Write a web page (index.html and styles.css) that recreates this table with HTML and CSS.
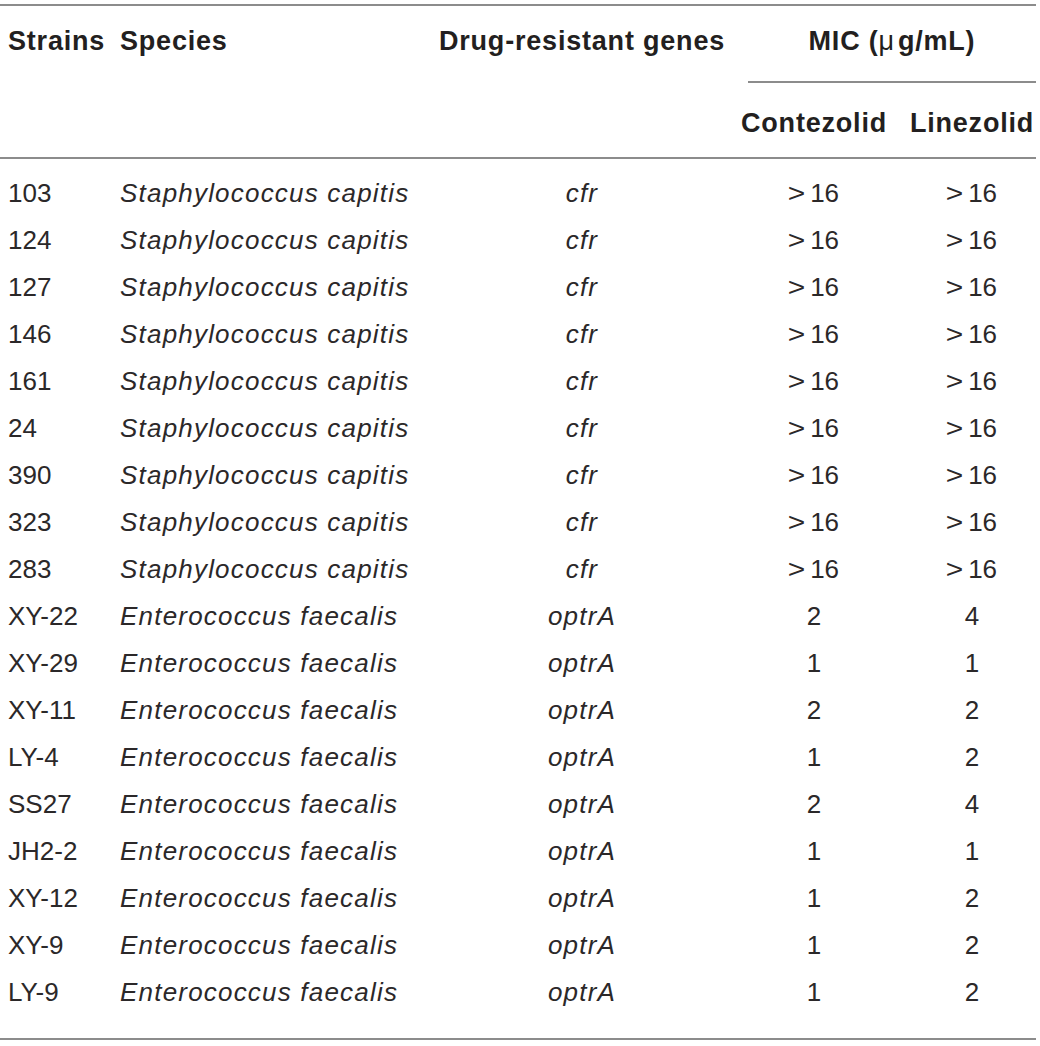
FILE: index.html
```html
<!DOCTYPE html>
<html lang="en">
  <head>
    <meta charset="UTF-8" />
    <meta name="viewport" content="width=device-width, initial-scale=1.0" />
    <title>MIC of contezolid and linezolid</title>
    <link rel="stylesheet" href="styles.css">
  </head>
  <body>
    <table class="mic-table">
      <colgroup>
        <col class="col-strain">
        <col class="col-species">
        <col class="col-gene">
        <col class="col-conte">
        <col class="col-line">
      </colgroup>
      <thead>
        <tr>
          <th rowspan="2" class="left">Strains</th>
          <th rowspan="2" class="left">Species</th>
          <th rowspan="2">Drug-resistant genes</th>
          <th colspan="2" class="group">
            <div class="group-title">MIC (<span class="mu">μ</span>g/mL)</div>
          </th>
        </tr>
        <tr class="sub">
          <th class="conte">Contezolid</th>
          <th>Linezolid</th>
        </tr>
      </thead>
      <tbody>
        <tr><td class="left">103</td><td class="left"><i>Staphylococcus capitis</i></td><td><i>cfr</i></td><td class="conte"><span class="gt">&gt;</span>16</td><td><span class="gt">&gt;</span>16</td></tr>
        <tr><td class="left">124</td><td class="left"><i>Staphylococcus capitis</i></td><td><i>cfr</i></td><td class="conte"><span class="gt">&gt;</span>16</td><td><span class="gt">&gt;</span>16</td></tr>
        <tr><td class="left">127</td><td class="left"><i>Staphylococcus capitis</i></td><td><i>cfr</i></td><td class="conte"><span class="gt">&gt;</span>16</td><td><span class="gt">&gt;</span>16</td></tr>
        <tr><td class="left">146</td><td class="left"><i>Staphylococcus capitis</i></td><td><i>cfr</i></td><td class="conte"><span class="gt">&gt;</span>16</td><td><span class="gt">&gt;</span>16</td></tr>
        <tr><td class="left">161</td><td class="left"><i>Staphylococcus capitis</i></td><td><i>cfr</i></td><td class="conte"><span class="gt">&gt;</span>16</td><td><span class="gt">&gt;</span>16</td></tr>
        <tr><td class="left">24</td><td class="left"><i>Staphylococcus capitis</i></td><td><i>cfr</i></td><td class="conte"><span class="gt">&gt;</span>16</td><td><span class="gt">&gt;</span>16</td></tr>
        <tr><td class="left">390</td><td class="left"><i>Staphylococcus capitis</i></td><td><i>cfr</i></td><td class="conte"><span class="gt">&gt;</span>16</td><td><span class="gt">&gt;</span>16</td></tr>
        <tr><td class="left">323</td><td class="left"><i>Staphylococcus capitis</i></td><td><i>cfr</i></td><td class="conte"><span class="gt">&gt;</span>16</td><td><span class="gt">&gt;</span>16</td></tr>
        <tr><td class="left">283</td><td class="left"><i>Staphylococcus capitis</i></td><td><i>cfr</i></td><td class="conte"><span class="gt">&gt;</span>16</td><td><span class="gt">&gt;</span>16</td></tr>
        <tr><td class="left">XY-22</td><td class="left"><i>Enterococcus faecalis</i></td><td><i>optrA</i></td><td class="conte">2</td><td>4</td></tr>
        <tr><td class="left">XY-29</td><td class="left"><i>Enterococcus faecalis</i></td><td><i>optrA</i></td><td class="conte">1</td><td>1</td></tr>
        <tr><td class="left">XY-11</td><td class="left"><i>Enterococcus faecalis</i></td><td><i>optrA</i></td><td class="conte">2</td><td>2</td></tr>
        <tr><td class="left">LY-4</td><td class="left"><i>Enterococcus faecalis</i></td><td><i>optrA</i></td><td class="conte">1</td><td>2</td></tr>
        <tr><td class="left">SS27</td><td class="left"><i>Enterococcus faecalis</i></td><td><i>optrA</i></td><td class="conte">2</td><td>4</td></tr>
        <tr><td class="left">JH2-2</td><td class="left"><i>Enterococcus faecalis</i></td><td><i>optrA</i></td><td class="conte">1</td><td>1</td></tr>
        <tr><td class="left">XY-12</td><td class="left"><i>Enterococcus faecalis</i></td><td><i>optrA</i></td><td class="conte">1</td><td>2</td></tr>
        <tr><td class="left">XY-9</td><td class="left"><i>Enterococcus faecalis</i></td><td><i>optrA</i></td><td class="conte">1</td><td>2</td></tr>
        <tr><td class="left">LY-9</td><td class="left"><i>Enterococcus faecalis</i></td><td><i>optrA</i></td><td class="conte">1</td><td>2</td></tr>
      </tbody>
    </table>
  </body>
</html>
```

FILE: styles.css
```css
* {
  margin: 0;
  padding: 0;
  box-sizing: border-box;
}

body {
  background: #fff;
  color: #231f20;
  font-family: "Liberation Sans", Arial, sans-serif;
}

.mic-table {
  width: 1036px;
  margin-top: 4px;
  border-collapse: collapse;
  table-layout: fixed;
  border-top: 2px solid #8c8c8c;
  border-bottom: 2px solid #8c8c8c;
}

.col-strain { width: 112px; }
.col-species { width: 324px; }
.col-gene { width: 292px; }
.col-conte { width: 180px; }
.col-line { width: 128px; }

th,
td {
  text-align: center;
  white-space: nowrap;
}

.left {
  text-align: left;
  padding-left: 8px;
}

.conte {
  padding-right: 8px;
}

/* header */
th {
  font-size: 27px;
  font-weight: bold;
  letter-spacing: 0.8px;
  line-height: 32px;
  vertical-align: top;
  padding-top: 19px;
  border-bottom: 2px solid #8c8c8c;
}

th.group {
  padding-left: 20px;
  border-bottom: none;
}

.group-title {
  padding-bottom: 24px;
  border-bottom: 2px solid #8c8c8c;
}

.mu {
  font-weight: normal;
  margin-right: 3px;
}

.sub th {
  padding-top: 24px;
  padding-bottom: 18px;
}

/* body */
td {
  font-size: 26px;
  line-height: 47px;
  color: #2b2829;
}

td i {
  font-style: italic;
  letter-spacing: 1.2px;
}

.gt {
  display: inline-block;
  transform: scaleX(1.15);
  margin-right: 6px;
}

tbody tr:first-child td {
  padding-top: 11px;
}

tbody tr:last-child td {
  padding-bottom: 22px;
}
```
